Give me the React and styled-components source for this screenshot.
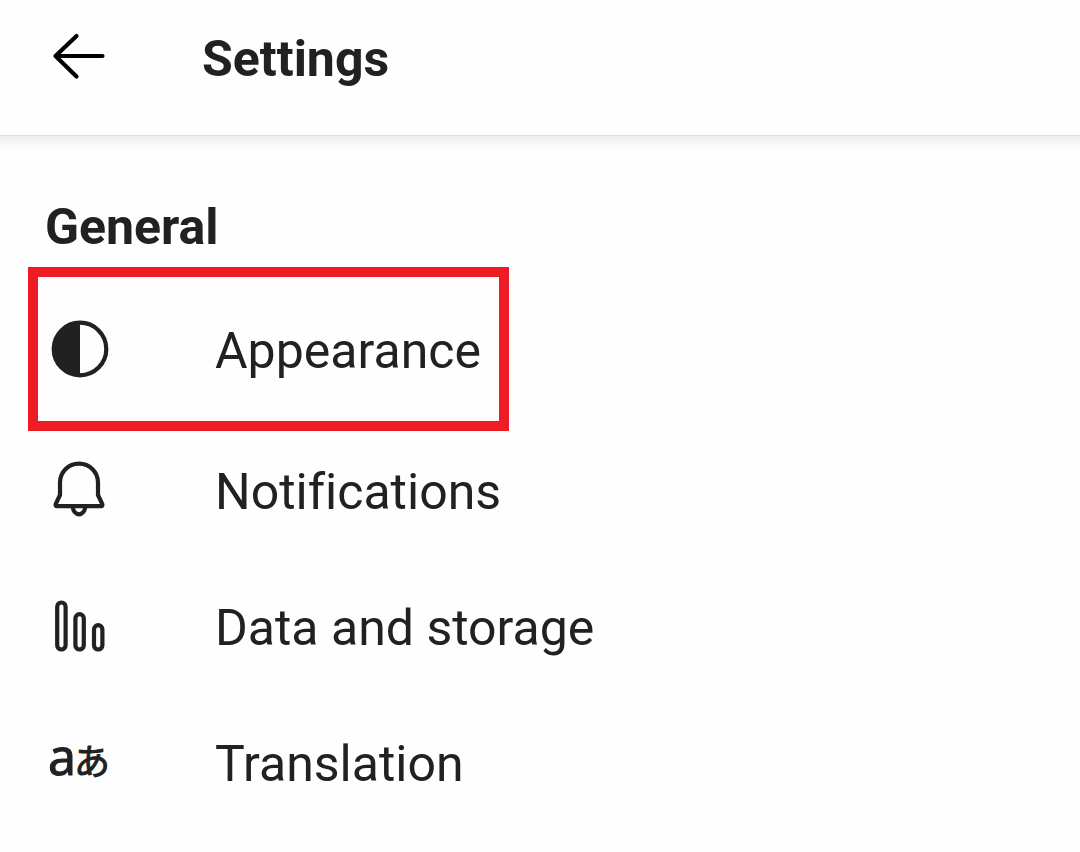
import styled, { createGlobalStyle } from 'styled-components'

const colors = {
  text: '#212121',
  highlight: '#ee1c24',
  background: '#fefefe',
}

const GlobalStyle = createGlobalStyle`
  * {
    box-sizing: border-box;
  }
  body {
    margin: 0;
    background: ${colors.background};
    color: ${colors.text};
    font-family: Roboto, sans-serif;
    font-variant-ligatures: none;
  }
`

const Header = styled.header`
  display: flex;
  align-items: flex-start;
  gap: 93px;
  height: 135px;
  padding: 26px 49px;
  background: ${colors.background};
  box-shadow: 0 1px 1px #e2e2e2, 0 -6px 12px 12px rgba(0, 0, 0, 0.08);
`

const BackButton = styled.button`
  display: flex;
  padding: 0;
  border: none;
  background: none;
  color: #000000;
  cursor: pointer;
`

const Title = styled.h1`
  margin: 0;
  font-size: 50px;
  line-height: 66px;
  font-weight: 700;
`

const SectionTitle = styled.h2`
  margin: 0;
  padding: 0 45px;
  font-size: 50px;
  line-height: 66px;
  font-weight: 700;
`

const Main = styled.main`
  padding-top: 59px;
`

const MenuList = styled.ul`
  display: flex;
  flex-direction: column;
  align-items: flex-start;
  gap: 2px;
  margin: 0;
  padding: 17px 38px;
  list-style-type: none;
`

const MenuLink = styled.a`
  display: flex;
  align-items: center;
  gap: 105px;
  height: ${(props) => (props.$highlighted ? '144px' : '134px')};
  padding: 0 18px 0 12px;
  outline: ${(props) => (props.$highlighted ? `10px solid ${colors.highlight}` : 'none')};
  color: inherit;
  text-decoration: none;
`

const MenuLabel = styled.span`
  padding-top: 4px;
  font-size: 50px;
  line-height: 66px;
`

const Icon = styled.svg`
  flex: none;
  width: 60px;
  height: 60px;
  overflow: visible;
  fill: none;
  stroke: currentColor;
  stroke-width: 4.2;
  stroke-linecap: round;
  stroke-linejoin: round;
`

const Letters = styled.text`
  fill: currentColor;
  stroke-width: 1;
  font-family: 'Noto Sans', 'Noto Sans CJK JP', sans-serif;
  font-weight: 400;
  font-size: ${(props) => props.$size}px;
`

const BackIcon = () => (
  <Icon viewBox="0 0 60 60" aria-hidden="true">
    <path d="M27.5 10 6.5 30l21 20.5M6.5 30H53.5" />
  </Icon>
)

const AppearanceIcon = () => (
  <Icon viewBox="0 0 60 60" aria-hidden="true">
    <circle cx="30" cy="30" r="26.3" />
    <path d="M30 3.7a26.3 26.3 0 0 0 0 52.6z" fill="currentColor" stroke="none" />
  </Icon>
)

const BellIcon = () => (
  <Icon viewBox="0 0 60 60" aria-hidden="true">
    <path d="M29 3.7C18.2 3.7 10 12.2 10 22.5V35L5.7 44.2C5.3 45.3 5.8 46.2 7 46.2H51C52.2 46.2 52.7 45.3 52.3 44.2L48 35V22.5C48 12.2 39.8 3.7 29 3.7Z" />
    <path d="M22.8 46.5a6.2 7.8 0 0 0 12.4 0" />
  </Icon>
)

const BarsIcon = () => (
  <Icon viewBox="0 0 60 60" aria-hidden="true">
    <rect x="7.2" y="6.5" width="8.4" height="47" rx="4.2" />
    <rect x="25.4" y="18.2" width="8.4" height="35.3" rx="4.2" />
    <rect x="44" y="29.2" width="8.4" height="24.3" rx="4.2" />
  </Icon>
)

const TranslationIcon = () => (
  <Icon viewBox="0 0 60 60" aria-hidden="true">
    <Letters x="-2" y="43" $size={50}>a</Letters>
    <Letters x="24" y="43" $size={36}>あ</Letters>
  </Icon>
)

const items = [
  { label: 'Appearance', icon: AppearanceIcon, highlighted: true },
  { label: 'Notifications', icon: BellIcon },
  { label: 'Data and storage', icon: BarsIcon },
  { label: 'Translation', icon: TranslationIcon },
]

const MenuItem = ({ item }) => {
  const ItemIcon = item.icon

  return (
    <li>
      <MenuLink href="#" $highlighted={item.highlighted}>
        <ItemIcon />
        <MenuLabel>{item.label}</MenuLabel>
      </MenuLink>
    </li>
  )
}

const App = () => (
  <>
    <GlobalStyle />
    <Header>
      <BackButton type="button" aria-label="Back">
        <BackIcon />
      </BackButton>
      <Title>Settings</Title>
    </Header>
    <Main>
      <SectionTitle>General</SectionTitle>
      <MenuList>
        {items.map((item) => (
          <MenuItem key={item.label} item={item} />
        ))}
      </MenuList>
    </Main>
  </>
)

export default App
